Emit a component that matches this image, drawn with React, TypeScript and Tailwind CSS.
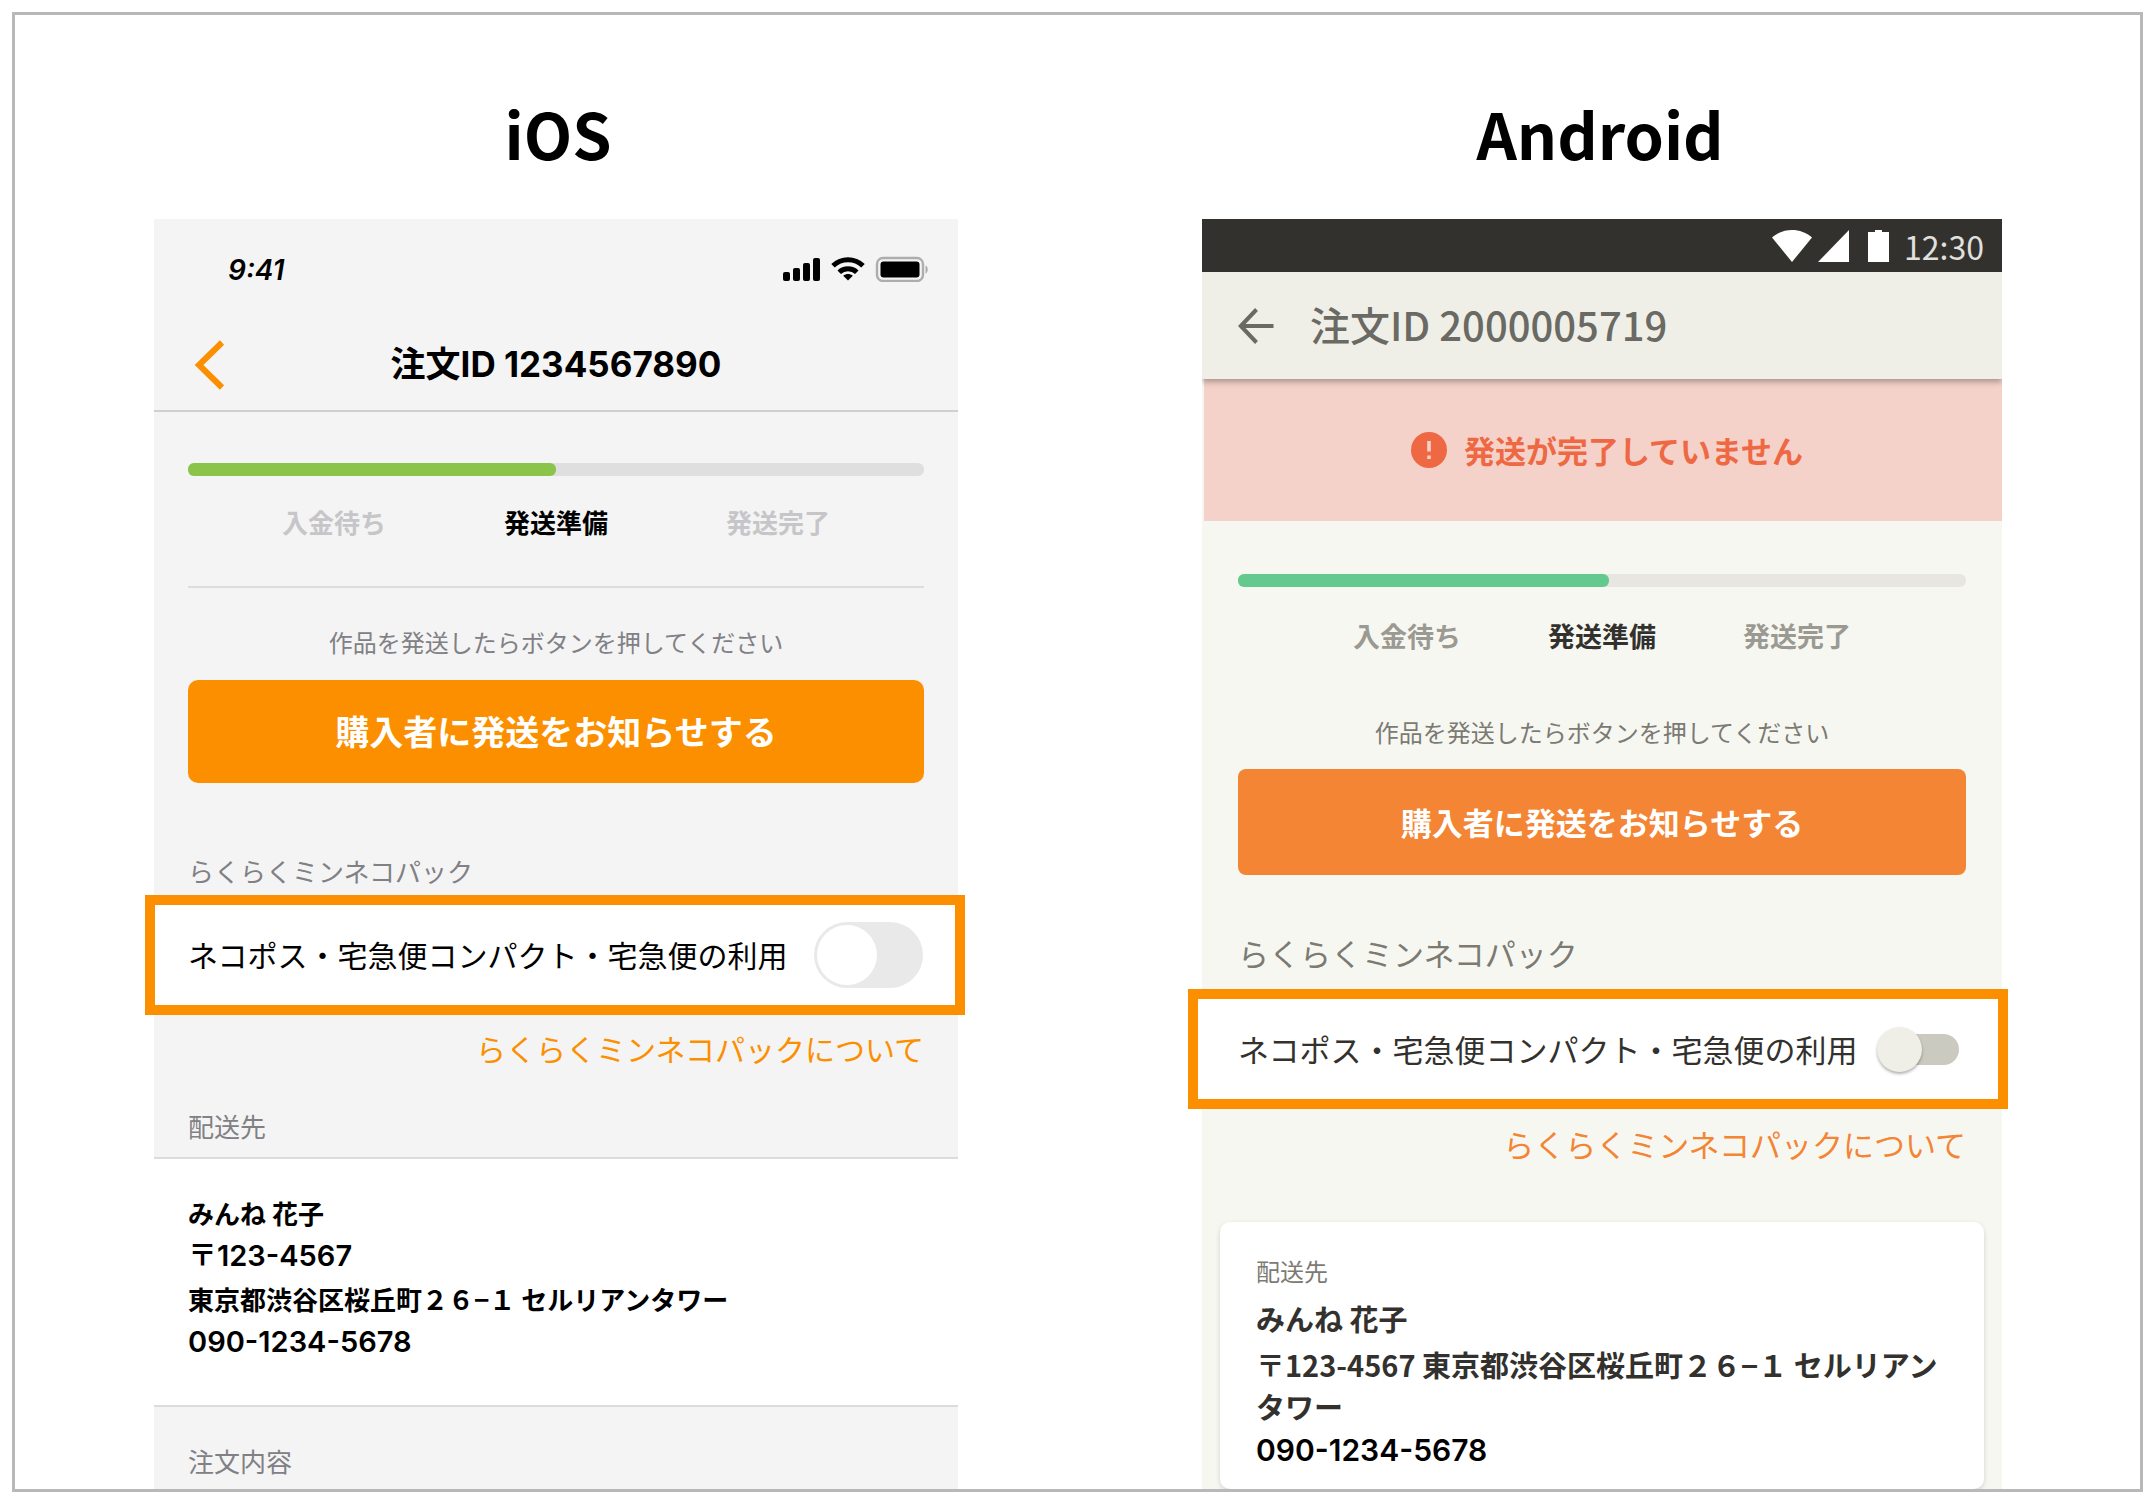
import React, { useState } from "react";

const CJK = "font-['Noto_Sans_CJK_JP',sans-serif]";
const MIXED = "font-['Inter','Noto_Sans_CJK_JP',sans-serif]";

function IosStatusIcons() {
  return (
    <div className="flex items-center gap-[10px]" aria-hidden="true">
      <svg width="38" height="26" viewBox="0 0 38 26" fill="#000">
        <rect x="0" y="16" width="7" height="9" rx="2" />
        <rect x="10" y="12" width="7" height="13" rx="2" />
        <rect x="20" y="7" width="7" height="18" rx="2" />
        <rect x="30" y="2" width="7" height="23" rx="2" />
      </svg>
      <svg width="34" height="26" viewBox="0 0 34 26" fill="none" stroke="#000" strokeWidth="5">
        <path d="M2 9.8C10.5 1.7 23.500 1.700 32 9.800" />
        <path d="M8.200 16.200C13 11.600 21 11.600 25.800 16.200" />
        <path d="M17 24.500L12.200 19.700C15 17.300 19 17.300 21.800 19.700Z" fill="#000" stroke="none" />
      </svg>
      <svg width="54" height="26" viewBox="0 0 54 26">
        <rect x="2" y="2" width="46" height="23" rx="6" fill="none" stroke="#adadad" strokeWidth="2.400" />
        <rect x="5.500" y="5.500" width="39" height="16" rx="3" fill="#000" />
        <path d="M50.500 9.500C53.500 10.500 53.500 16.500 50.500 17.500Z" fill="#adadad" />
      </svg>
    </div>
  );
}

function AndroidStatusIcons() {
  return (
    <div className="flex items-center" aria-hidden="true">
      <svg width="40" height="32" viewBox="0 0 40 32" fill="#fff">
        <path d="M20 32L0 7.500C11-2.500 29-2.500 40 7.500Z" />
      </svg>
      <svg className="ml-[6px]" width="31" height="32" viewBox="0 0 31 32" fill="#fff">
        <path d="M31 0V32H0Z" />
      </svg>
      <svg className="ml-[19px]" width="21" height="32" viewBox="0 0 21 32" fill="#fff">
        <path d="M7 0H14V2H21V32H0V2H7Z" />
      </svg>
    </div>
  );
}

function IosScreen() {
  const [on, setOn] = useState(false);
  return (
    <div className={`flex-1 bg-[#f4f4f4] text-black ${CJK}`}>
      <div className="flex h-[100px] items-center justify-between pr-[29px] pl-[74px]">
        <span className={`pt-[2px] text-[28px] font-semibold italic ${MIXED}`}>9:41</span>
        <IosStatusIcons />
      </div>
      <header className="grid h-[93px] grid-cols-[100px_1fr_100px] items-center border-b-2 border-[#cfcfd3]">
        <button type="button" aria-label="戻る" className="pl-[40px]">
          <svg width="32" height="50" viewBox="0 0 32 50" fill="none" stroke="#fb8f00" strokeWidth="6">
            <path d="M28 2.500L5 25L28 47.500" />
          </svg>
        </button>
        <h3 className={`text-center text-[35px] font-bold ${MIXED}`}>注文ID 1234567890</h3>
      </header>

      <div className="px-[34px] pt-[51px]">
        <div className="h-[13px] rounded-[6px] bg-[#dfdfdf]">
          <div className="h-full w-1/2 rounded-[6px] bg-[#8ac44a]" />
        </div>
        <ol className="mt-[26px] flex justify-center gap-[118px] text-[26px] leading-[40px] font-bold text-[#c6c6c9]">
          <li>入金待ち</li>
          <li className="text-black">発送準備</li>
          <li>発送完了</li>
        </ol>
        <hr className="mt-[44px] border-t-2 border-[#dcdcdc]" />
        <p className="mt-[34px] text-center text-[24px] leading-[40px] text-[#808085]">
          作品を発送したらボタンを押してください
        </p>
        <button
          type="button"
          className="mt-[18px] h-[103px] w-full rounded-[10px] bg-[#fc8f00] pb-[2px] text-[34px] font-bold text-white"
        >
          購入者に発送をお知らせする
        </button>
        <h4 className="mt-[68px] text-[26px] leading-[40px] text-[#808085]">らくらくミンネコパック</h4>
      </div>

      <label className="mt-[4px] -mr-[7px] -ml-[9px] flex h-[120px] items-center justify-between border-[10px] border-[#fc8f00] bg-white pr-[32px] pl-[33px] text-[30px]">
        <span className="pb-[2px]">ネコポス・宅急便コンパクト・宅急便の利用</span>
        <input
          type="checkbox"
          role="switch"
          checked={on}
          onChange={(e) => setOn(e.target.checked)}
          className="h-[66px] w-[109px] shrink-0 appearance-none rounded-full bg-[#e9e9e9] p-[3px] before:block before:size-[60px] before:rounded-full before:bg-white checked:bg-[#8ac44a] checked:before:ml-[43px]"
        />
      </label>

      <div className="px-[34px]">
        <p className="mt-[13px] text-right text-[30px] leading-[40px] text-[#fc8f00]">
          <a href="#about">らくらくミンネコパックについて</a>
        </p>
        <h4 className="mt-[38px] pb-[11px] text-[26px] leading-[40px] text-[#808085]">配送先</h4>
      </div>
      <address className="border-y-2 border-[#dcdcdc] bg-white px-[34px] pt-[32px] pb-[42px] text-[26px] leading-[43px] font-bold not-italic">
        <p>みんね 花子</p>
        <p className={`text-[29px] font-semibold ${MIXED}`}>〒123-4567</p>
        <p>東京都渋谷区桜丘町２６−１ セルリアンタワー</p>
        <p className={`text-[29px] font-semibold ${MIXED}`}>090-1234-5678</p>
      </address>
      <h4 className="px-[34px] pt-[34px] pb-[7px] text-[26px] leading-[40px] text-[#808085]">注文内容</h4>
    </div>
  );
}

function AndroidScreen() {
  const [on, setOn] = useState(false);
  return (
    <div className={`flex-1 bg-[#f7f7f2] text-[#33312d] ${CJK}`}>
      <div className="flex h-[53px] items-center justify-end gap-[15px] bg-[#33312d] pr-[18px]">
        <AndroidStatusIcons />
        <span className="text-[32px] leading-[40px] text-[#e0e0de]">12:30</span>
      </div>
      <header className="relative flex h-[107px] items-center bg-[#efefe8] pl-[36px] text-[#6a6963] shadow-[0_3px_6px_rgba(0,0,0,0.3)] [clip-path:inset(0_0_-12px_0)]">
        <button type="button" aria-label="戻る">
          <svg width="36" height="36" viewBox="0 0 36 36" fill="none" stroke="currentColor" strokeWidth="4">
            <path d="M35.500 18H3.500M18.500 1.500L2.800 18L18.500 34.500" />
          </svg>
        </button>
        <h3 className="ml-[36px] pb-[3px] text-[40px] leading-[60px] font-medium">注文ID 2000005719</h3>
      </header>
      <div
        role="alert"
        className="ml-[2px] flex h-[142px] items-center justify-center gap-[17px] bg-[#f5d2c9] pl-[8px] text-[31px] font-bold text-[#ee6843]"
      >
        <svg width="36" height="36" viewBox="0 0 36 36" aria-hidden="true">
          <circle cx="18" cy="18" r="18" fill="#ee6843" />
          <path d="M18 9V19.500M18 23.500V27" stroke="#f5d2c9" strokeWidth="3.600" />
        </svg>
        発送が完了していません
      </div>

      <div className="px-[36px] pt-[53px]">
        <div className="h-[13px] rounded-[6px] bg-[#e8e6e1]">
          <div className="h-full w-[51%] rounded-[6px] bg-[#64c98f]" />
        </div>
        <ol className="mt-[29px] flex justify-center gap-[87px] text-[27px] leading-[40px] font-bold text-[#9b9a92]">
          <li>入金待ち</li>
          <li className="text-[#33312d]">発送準備</li>
          <li>発送完了</li>
        </ol>
        <p className="mt-[56px] text-center text-[24px] leading-[40px] text-[#7b7a73]">
          作品を発送したらボタンを押してください
        </p>
        <button
          type="button"
          className="mt-[17px] h-[106px] w-full rounded-[8px] bg-[#f38534] text-[31px] font-bold text-white"
        >
          購入者に発送をお知らせする
        </button>
        <h4 className="mt-[58px] text-[31px] leading-[40px] text-[#7b7a73]">らくらくミンネコパック</h4>
      </div>

      <label className="mt-[16px] -mr-[6px] -ml-[14px] flex h-[120px] items-center justify-between border-[10px] border-[#fc8f00] bg-white pr-[39px] pl-[40px] text-[31px]">
        ネコポス・宅急便コンパクト・宅急便の利用
        <input
          type="checkbox"
          role="switch"
          checked={on}
          onChange={(e) => setOn(e.target.checked)}
          className="flex h-[31px] w-[76px] shrink-0 appearance-none items-center rounded-full bg-[#cacac0] before:-ml-[6px] before:block before:size-[45px] before:shrink-0 before:rounded-full before:bg-[#efeee7] before:shadow-[0_2px_3px_rgba(0,0,0,0.3)] checked:bg-[#f9c299] checked:before:ml-[37px] checked:before:bg-[#f38534]"
        />
      </label>

      <p className="mt-[15px] px-[36px] text-right text-[31px] leading-[40px] text-[#f38534]">
        <a href="#about">らくらくミンネコパックについて</a>
      </p>

      <section className="mx-[18px] mt-[58px] rounded-[10px] bg-white px-[36px] pt-[29px] pb-[18px] text-[29px] leading-[42px] font-bold shadow-[0_2px_5px_rgba(0,0,0,0.15)]">
        <h4 className="text-[24px] leading-[40px] font-normal text-[#7b7a73]">配送先</h4>
        <address className="not-italic">
          <p className="mt-[6px]">みんね 花子</p>
          <p className="mt-[4px]">〒123-4567 東京都渋谷区桜丘町２６−１ セルリアンタワー</p>
          <p className={`mt-[2px] text-[30px] font-semibold text-black ${MIXED}`}>090-1234-5678</p>
        </address>
      </section>
    </div>
  );
}

export default function App() {
  return (
    <div className="bg-white pt-[12px] pb-[14px]" lang="ja">
      <main className="mr-[13px] ml-[12px] grid grid-cols-[804fr_800fr] gap-x-[244px] overflow-hidden border-3 border-[#b8b8b8] pt-[70px] pr-[138px] pl-[139px]">
        <section className="flex flex-col">
          <h2 className={`mb-[38px] pl-[4px] text-center text-[63px] leading-[96px] font-bold text-black ${CJK}`}>iOS</h2>
          <IosScreen />
        </section>
        <section className="flex flex-col">
          <h2 className={`mb-[38px] pr-[4px] text-center text-[63px] leading-[96px] font-bold text-black ${CJK}`}>Android</h2>
          <AndroidScreen />
        </section>
      </main>
    </div>
  );
}
